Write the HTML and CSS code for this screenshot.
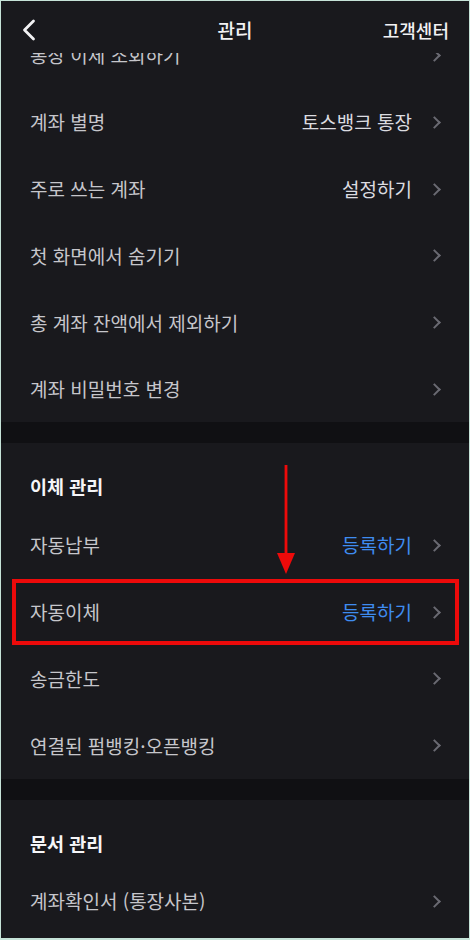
FILE: index.html
```html
<!DOCTYPE html>
<html lang="ko">
<head>
<meta charset="utf-8">
<title>관리</title>
<link rel="stylesheet" href="styles.css">
</head>
<body>
<div class="screen">
  <header class="topbar">
    <svg class="back" width="14" height="22" viewBox="0 0 14 22"><path d="M11.5 2 L2.5 11 L11.5 20" fill="none" stroke="#f2f2f4" stroke-width="2.8" stroke-linecap="round" stroke-linejoin="round"/></svg>
    <div class="title">관리</div>
    <div class="help">고객센터</div>
  </header>

  <div class="content">
    <section class="group first">
      <div class="row"><span class="label">통장 이체 조회하기</span><span class="chev"></span></div>
      <div class="row"><span class="label">계좌 별명</span><span class="value">토스뱅크 통장</span><span class="chev"></span></div>
      <div class="row"><span class="label">주로 쓰는 계좌</span><span class="value">설정하기</span><span class="chev"></span></div>
      <div class="row"><span class="label">첫 화면에서 숨기기</span><span class="chev"></span></div>
      <div class="row"><span class="label">총 계좌 잔액에서 제외하기</span><span class="chev"></span></div>
      <div class="row"><span class="label">계좌 비밀번호 변경</span><span class="chev"></span></div>
    </section>

    <section class="group">
      <h2 class="group-title">이체 관리</h2>
      <div class="row"><span class="label">자동납부</span><span class="value blue">등록하기</span><span class="chev"></span></div>
      <div class="row highlight"><span class="label">자동이체</span><span class="value blue">등록하기</span><span class="chev"></span></div>
      <div class="row"><span class="label">송금한도</span><span class="chev"></span></div>
      <div class="row"><span class="label">연결된 펌뱅킹·오픈뱅킹</span><span class="chev"></span></div>
      <svg class="arrow" width="20" height="110" viewBox="0 0 20 110"><rect x="8.6" y="0" width="2.8" height="92" fill="#ee0a0a"/><path d="M1 88 L19 88 L10 109 Z" fill="#ee0a0a"/></svg>
    </section>

    <section class="group">
      <h2 class="group-title">문서 관리</h2>
      <div class="row"><span class="label">계좌확인서 (통장사본)</span><span class="chev"></span></div>
    </section>
  </div>
</div>
</body>
</html>
```

FILE: styles.css
```css
* { box-sizing: border-box; }
html, body { margin: 0; padding: 0; }
body {
  width: 470px;
  height: 940px;
  background: #c6e3d8;
  font-family: "Noto Sans CJK KR", "Noto Sans", sans-serif;
}
.screen {
  position: relative;
  width: 470px;
  height: 940px;
  border: 1px solid #c6e3d8;
  border-bottom-width: 2px;
  background: #19191d;
  overflow: hidden;
}
.topbar {
  position: absolute;
  top: 0;
  left: 0;
  right: 0;
  height: 52px;
  background: #19191d;
  z-index: 5;
}
.back {
  position: absolute;
  left: 21px;
  top: 18px;
}
.title {
  position: absolute;
  left: 0;
  right: 0;
  top: 16px;
  text-align: center;
  color: #f2f2f4;
  font-size: 19px;
  font-weight: 500;
  line-height: 26px;
}
.help {
  position: absolute;
  right: 20px;
  top: 16px;
  color: #f2f2f4;
  font-size: 18px;
  font-weight: 500;
  line-height: 26px;
}
.content {
  padding-top: 20.6px;
  display: flex;
  flex-direction: column;
  gap: 21px;
  background: #101013;
}
.group {
  position: relative;
  background: #19191d;
  padding: 0 28px 0 29px;
}
.group-title {
  margin: 0;
  padding: 31px 0 13px;
  line-height: 24px;
  font-size: 18.5px;
  font-weight: 700;
  color: #f5f5f7;
}
.row {
  position: relative;
  height: 66.8px;
  display: flex;
  align-items: center;
}
.label {
  flex: 1;
  font-size: 19px;
  color: #c6c6cb;
}
.value {
  font-size: 19px;
  color: #dcdce0;
  margin-right: 19px;
}
.value.blue { color: #3f8cf0; }
.chev {
  width: 10px;
  height: 14px;
  position: relative;
}
.chev::before {
  content: "";
  position: absolute;
  left: -1px;
  top: 3px;
  width: 7px;
  height: 7px;
  border-top: 2px solid #6a6a72;
  border-right: 2px solid #6a6a72;
  transform: rotate(45deg);
}
.highlight::after {
  content: "";
  position: absolute;
  left: -18px;
  right: -18px;
  top: 1px;
  bottom: 0;
  border: 4px solid #ec0a0a;
}
.arrow {
  position: absolute;
  left: 275px;
  top: 22px;
}
```
